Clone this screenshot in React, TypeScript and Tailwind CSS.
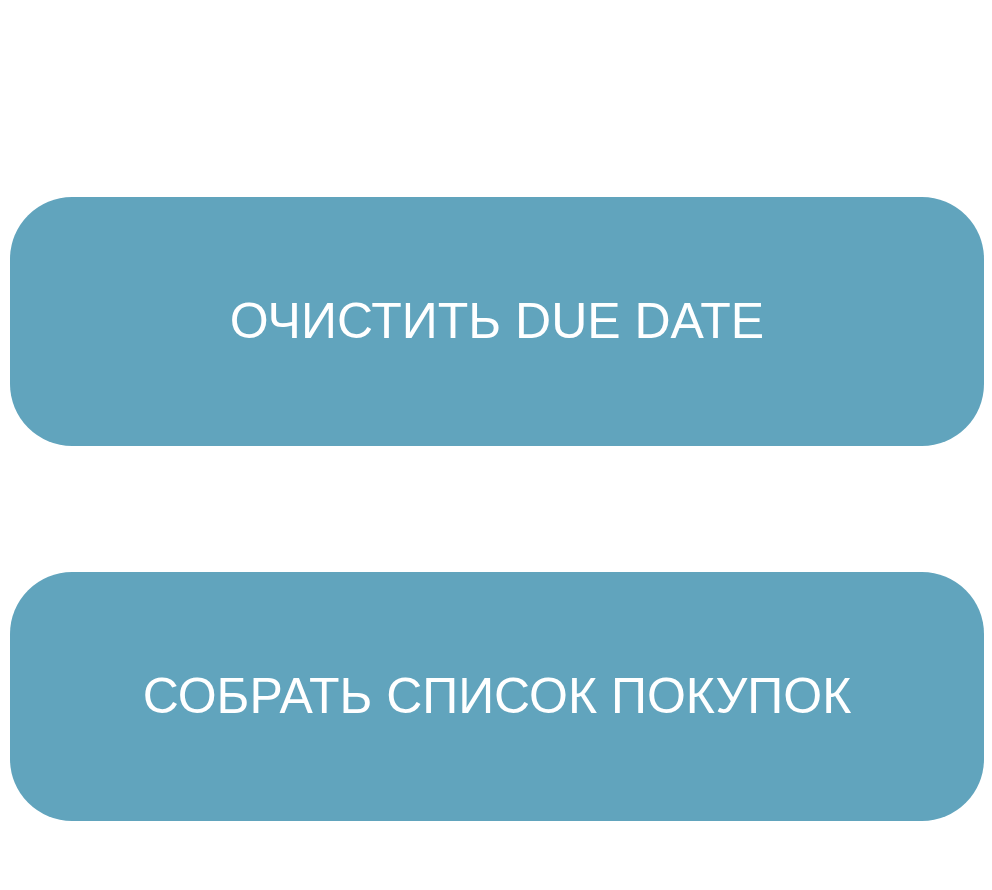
export default function App() {
  const items = ["ОЧИСТИТЬ DUE DATE", "СОБРАТЬ СПИСОК ПОКУПОК"];

  return (
    <div className="min-h-[890px] bg-white pt-[197px] pl-[10px] font-['Liberation_Sans',Arial,sans-serif]">
      <div className="flex flex-col gap-[126px]">
        {items.map((label) => (
          <button
            key={label}
            className="flex h-[249px] w-[974px] items-center justify-center rounded-[62px] bg-[#61a4bd] text-[50px] text-white"
          >
            {label}
          </button>
        ))}
      </div>
    </div>
  );
}
